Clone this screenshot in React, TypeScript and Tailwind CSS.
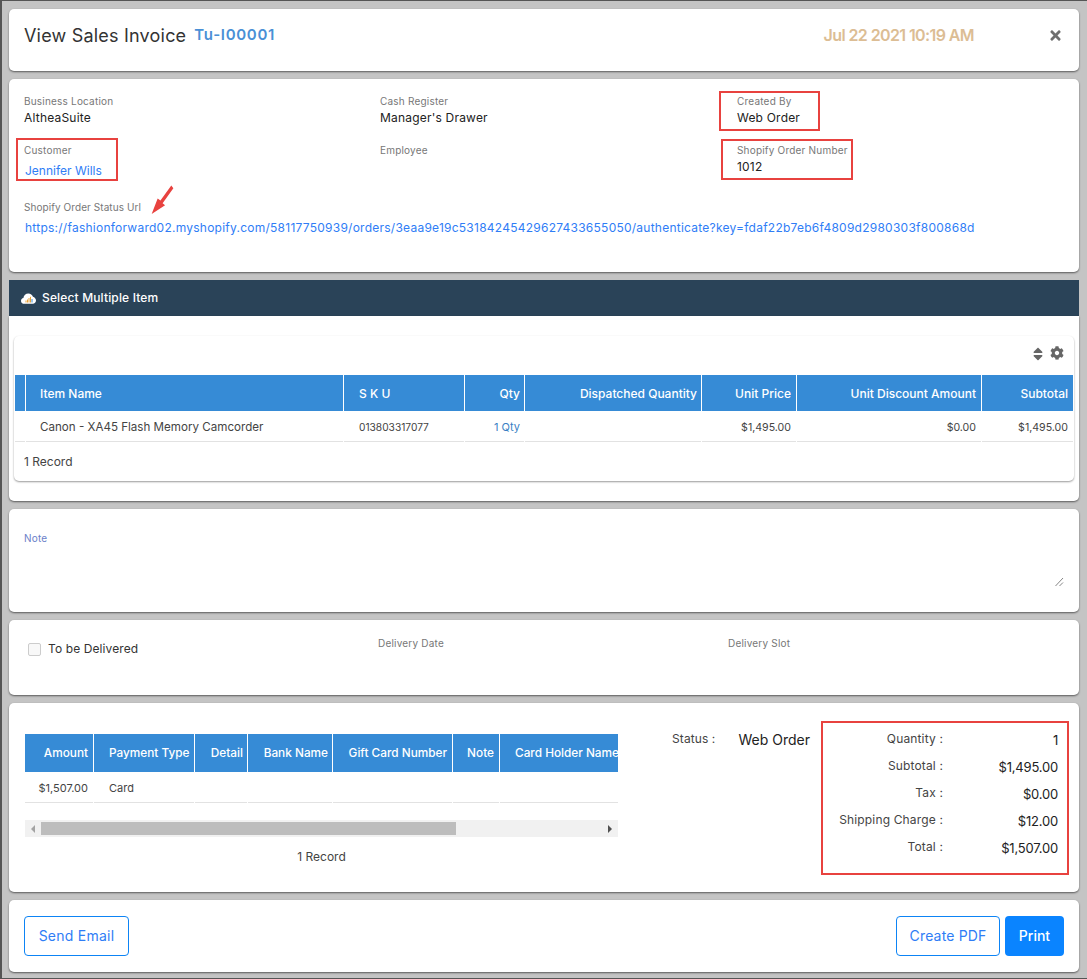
import { FaCog, FaSort, FaTimes } from "react-icons/fa";

const itemCols = [
  { name: "", w: "w-[10px]" },
  { name: "Item Name", w: "w-[317px]", cls: "pl-[14px]" },
  { name: "S K U", w: "w-[120px]", cls: "pl-[15px]" },
  { name: "Qty", w: "w-[59px]", cls: "justify-end pr-[4px]" },
  { name: "Dispatched Quantity", w: "w-[176px]", cls: "justify-end pr-[4px]" },
  { name: "Unit Price", w: "w-[94px]", cls: "justify-end pr-[5px]" },
  { name: "Unit Discount Amount", w: "w-[184px]", cls: "justify-end pr-[5px]" },
  { name: "Subtotal", w: "w-[91px]", cls: "justify-end pr-[5px]" },
];

const payCols = [
  { name: "Amount", w: "w-[68px]", cls: "justify-end pr-[5px]", val: "$1,507.00" },
  { name: "Payment Type", w: "w-[100px]", cls: "pl-[15px]", val: "Card" },
  { name: "Detail", w: "w-[52px]", cls: "justify-end pr-[4px]", val: "" },
  { name: "Bank Name", w: "w-[84px]", cls: "justify-end pr-[4px]", val: "" },
  { name: "Gift Card Number", w: "w-[119px]", cls: "justify-end pr-[5px]", val: "" },
  { name: "Note", w: "w-[46px]", cls: "justify-end pr-[5px]", val: "" },
  { name: "Card Holder Name", w: "w-[119px]", cls: "pl-[15px]", val: "" },
];

const totals = [
  ["Quantity :", "1"],
  ["Subtotal :", "$1,495.00"],
  ["Tax :", "$0.00"],
  ["Shipping Charge :", "$12.00"],
  ["Total :", "$1,507.00"],
];

const card = "bg-white rounded-[5px] shadow-[0_1px_2px_rgba(0,0,0,0.55)]";
const value = "text-[12px] leading-[16px] tracking-[0.2px]";
const link = "text-[12px] leading-[16px] text-[#2f7df6]";

const Field = ({ label, children }: { label: string; children?: React.ReactNode }) => (
  <div>
    <div className="text-[10px] leading-[14px] tracking-[0.2px] text-[#777]">{label}</div>
    {children}
  </div>
);

const RedBox = ({ cls }: { cls: string }) => (
  <div className={`absolute border-2 border-[#e8423f] ${cls}`} />
);

export default function App() {
  return (
    <div className="h-[979px] w-[1087px] overflow-hidden bg-[#c4c4c4] border-t border-l-2 border-b border-[#555] font-['Inter','Liberation_Sans',sans-serif] text-[#222]">
      <div className="ml-[7px] mt-[8px] flex w-[1070px] flex-col gap-[8px]">
        {/* title */}
        <div className={`${card} flex h-[62px] items-center pb-[10px] pl-[15px] pr-[16px]`}>
          <span className="text-[18px] tracking-[0.2px] text-[#333]">View Sales Invoice</span>
          <span className="ml-[8px] text-[15px] font-semibold tracking-[0.7px] text-[#4a90d6]">Tu-I00001</span>
          <span className="ml-auto mr-[74px] text-[16px] font-semibold tracking-[-0.6px] text-[#dcbd94]">Jul 22 2021 10:19 AM</span>
          <FaTimes className="text-[15px] text-[#6f6f6f]" />
        </div>

        {/* details */}
        <div className={`${card} relative h-[193px] px-[15px] pt-[15px]`}>
          <div className="grid grid-cols-[356px_357px_1fr]">
            <Field label="Business Location">
              <div className={`mt-[2px] ${value}`}>AltheaSuite</div>
            </Field>
            <Field label="Cash Register">
              <div className={`mt-[2px] ${value}`}>Manager's Drawer</div>
            </Field>
            <Field label="Created By">
              <div className={`mt-[2px] ${value}`}>Web Order</div>
            </Field>
          </div>
          <div className="mt-[17px] grid grid-cols-[356px_357px_1fr]">
            <Field label="Customer">
              <div className={`mt-[6px] pl-[1px] ${link}`}>Jennifer Wills</div>
            </Field>
            <Field label="Employee" />
            <Field label="Shopify Order Number">
              <div className={`mt-[2px] ${value}`}>1012</div>
            </Field>
          </div>
          <div className="mt-[21px]">
            <div className="text-[10px] leading-[14px] tracking-[0.07px] text-[#777]">Shopify Order Status Url</div>
            <div className={`mt-[6px] whitespace-nowrap pl-[1px] tracking-[0.245px] ${link}`}>
              https://fashionforward02.myshopify.com/58117750939/orders/3eaa9e19c53184245429627433655050/authenticate?key=fdaf22b7eb6f4809d2980303f800868d
            </div>
          </div>
          <RedBox cls="left-[710px] top-[12px] h-[40px] w-[101px]" />
          <RedBox cls="left-[7px] top-[59px] h-[43px] w-[102px]" />
          <RedBox cls="left-[712px] top-[60px] h-[41px] w-[132px]" />
          <svg className="absolute left-[140px] top-[105px]" width="26" height="31" viewBox="0 0 24 30">
            <path d="M21 1.5 L10.5 16 L7.8 14 L2 29 L15 20.5 L12.6 18.6 L23 4 Z" fill="#e8423f" />
          </svg>
        </div>

        {/* items */}
        <div>
          <div className="flex h-[36px] items-center gap-[6px] bg-[#2a4358] pl-[12px] text-[12px] font-medium tracking-[0.15px] text-white">
            <svg width="15" height="11" viewBox="0 0 15 11">
              <path d="M3.4 10.8 C1.3 10.8 0 9.5 0 7.9 C0 6.4 1 5.3 2.4 5.1 C2.6 2.4 4.8 0.4 7.4 0.4 C9.5 0.4 11.3 1.7 12 3.7 C13.7 4.2 15 5.7 15 7.5 C15 9.4 13.6 10.8 11.8 10.8 Z" fill="#fff" />
              <path d="M5 9.5 V7.5 M6.5 9.5 V6.5 M8 9.5 V5 M9.5 9.5 V3.8" stroke="#e8a33a" strokeWidth="1" />
              <path d="M11 9.5 V6" stroke="#3a8fd6" strokeWidth="1" />
            </svg>
            Select Multiple Item
          </div>
          <div className={`${card} h-[185px] rounded-t-none px-[5px] pt-[20px]`}>
            <div className="h-[145px] w-[1060px] rounded-[5px] shadow-[0_1px_2px_rgba(0,0,0,0.4)]">
              <div className="flex h-[39px] items-start justify-end gap-[4px] pr-[10px] pt-[10px] text-[#666]">
                <FaSort className="text-[16px]" />
                <FaCog className="text-[14px]" />
              </div>
              <div className="flex pl-[1px]">
                {itemCols.map((col) => (
                  <div key={col.name} className={`${col.w} mr-[1px] flex h-[36px] items-center bg-[#368bd6] pt-[1px] text-[12px] font-medium text-white ${col.cls ?? ""}`}>
                    {col.name}
                  </div>
                ))}
              </div>
              <div className="flex pl-[1px] text-[#444]">
                {[
                  ["w-[10px]", ""],
                  ["w-[317px] pl-[14px] text-[11.6px]", "Canon - XA45 Flash Memory Camcorder"],
                  ["w-[120px] pl-[15px] text-[10.2px]", "013803317077"],
                  ["w-[59px] justify-end pr-[4px] text-[11px] text-[#3a7fc4]", "1 Qty"],
                  ["w-[176px]", ""],
                  ["w-[94px] justify-end pr-[5px] text-[10.6px]", "$1,495.00"],
                  ["w-[184px] justify-end pr-[5px] text-[10.6px]", "$0.00"],
                  ["w-[91px] justify-end pr-[5px] text-[10.6px]", "$1,495.00"],
                ].map(([cls, text], i) => (
                  <div key={i} className={`mr-[1px] flex h-[31px] items-center border-b border-[#e2e2e2] pt-[3px] ${cls}`}>
                    {text}
                  </div>
                ))}
              </div>
              <div className="pl-[10px] pt-[12px] text-[12px] leading-[16px] text-[#444]">1 Record</div>
            </div>
          </div>
        </div>

        {/* note */}
        <div className={`${card} relative h-[103px] px-[15px] pt-[22px]`}>
          <div className="text-[10px] leading-[14px] tracking-[0.2px] text-[#6b7fc9]">Note</div>
          <svg className="absolute right-[15px] top-[68px]" width="9" height="10" viewBox="0 0 9 10">
            <path d="M0.5 9 L8 1 M4.5 9 L8 5.5" stroke="#666" strokeWidth="0.8" />
          </svg>
        </div>

        {/* delivery */}
        <div className={`${card} flex h-[75px] pl-[19px] pt-[16px]`}>
          <div className="flex w-[350px] items-center gap-[7px] self-start pt-[5px]">
            <div className="h-[13px] w-[13px] rounded-[2px] border border-[#ccc] bg-[#f8f8f8]" />
            <span className="text-[12px] leading-[16px] tracking-[0.1px] text-[#333]">To be Delivered</span>
          </div>
          <div className="w-[350px] text-[10px] leading-[14px] tracking-[0.2px] text-[#777]">Delivery Date</div>
          <div className="text-[10px] leading-[14px] tracking-[0.2px] text-[#777]">Delivery Slot</div>
        </div>

        {/* payment */}
        <div className={`${card} relative flex h-[189px]`}>
          <div className="ml-[16px] mt-[31px] w-[593px] overflow-hidden">
            <div className="flex whitespace-nowrap">
              {payCols.map((col) => (
                <div key={col.name} className={`${col.w} mr-[1px] flex h-[38px] shrink-0 items-center bg-[#368bd6] pt-[1px] text-[11.8px] font-medium text-white ${col.cls}`}>
                  {col.name}
                </div>
              ))}
            </div>
            <div className="flex text-[#444]">
              {payCols.map((col) => (
                <div key={col.name} className={`${col.w} mr-[1px] flex h-[31px] shrink-0 items-center border-b border-[#e2e2e2] pt-[3px] text-[11px] ${col.cls}`}>
                  {col.val}
                </div>
              ))}
            </div>
            <div className="mt-[17px] flex h-[17px] items-center bg-[#f1f1f1]">
              <div className="flex w-[16px] justify-center">
                <div className="h-0 w-0 border-y-[4px] border-r-[4px] border-y-transparent border-r-[#a3a3a3]" />
              </div>
              <div className="h-[13px] w-[415px] bg-[#bdbdbd]" />
              <div className="ml-auto flex w-[16px] justify-center">
                <div className="h-0 w-0 border-y-[4px] border-l-[4px] border-y-transparent border-l-[#505050]" />
              </div>
            </div>
            <div className="mt-[12px] text-center text-[12px] leading-[16px] text-[#444]">1 Record</div>
          </div>
          <div className="ml-[54px] mt-[28px] text-[12px] leading-[16px] tracking-[0.1px] text-[#444]">Status :</div>
          <div className="ml-[23px] mt-[28px] text-[14px] leading-[18px]">Web Order</div>
          <div className="absolute left-[812px] top-[18px] h-[154px] w-[248px] border-2 border-[#e8423f] pl-[6px] pr-[9px] pt-[8px]">
            <div className="grid grid-cols-[114px_1fr] gap-y-[9px]">
              {totals.map(([label, val]) => (
                <div key={label} className="contents">
                  <div className="-mt-[1px] whitespace-nowrap text-right text-[12px] leading-[18px] tracking-[0.15px] text-[#444]">{label}</div>
                  <div className="text-right text-[13px] leading-[18px] tracking-[-0.2px] text-[#222]">{val}</div>
                </div>
              ))}
            </div>
          </div>
        </div>

        {/* footer */}
        <div className={`${card} flex h-[72px] items-center px-[15px]`}>
          <button className="h-[40px] w-[105px] rounded-[4px] border border-[#0d84f5] pb-[1px] text-[14px] tracking-[0.25px] text-[#2f7df6]">Send Email</button>
          <button className="ml-auto h-[40px] w-[104px] rounded-[4px] border border-[#0d84f5] pb-[1px] text-[14px] tracking-[0.15px] text-[#2f7df6]">Create PDF</button>
          <button className="ml-[5px] h-[40px] w-[59px] rounded-[4px] bg-[#0a84ff] pb-[1px] text-[14px] font-medium text-white">Print</button>
        </div>
      </div>
    </div>
  );
}
